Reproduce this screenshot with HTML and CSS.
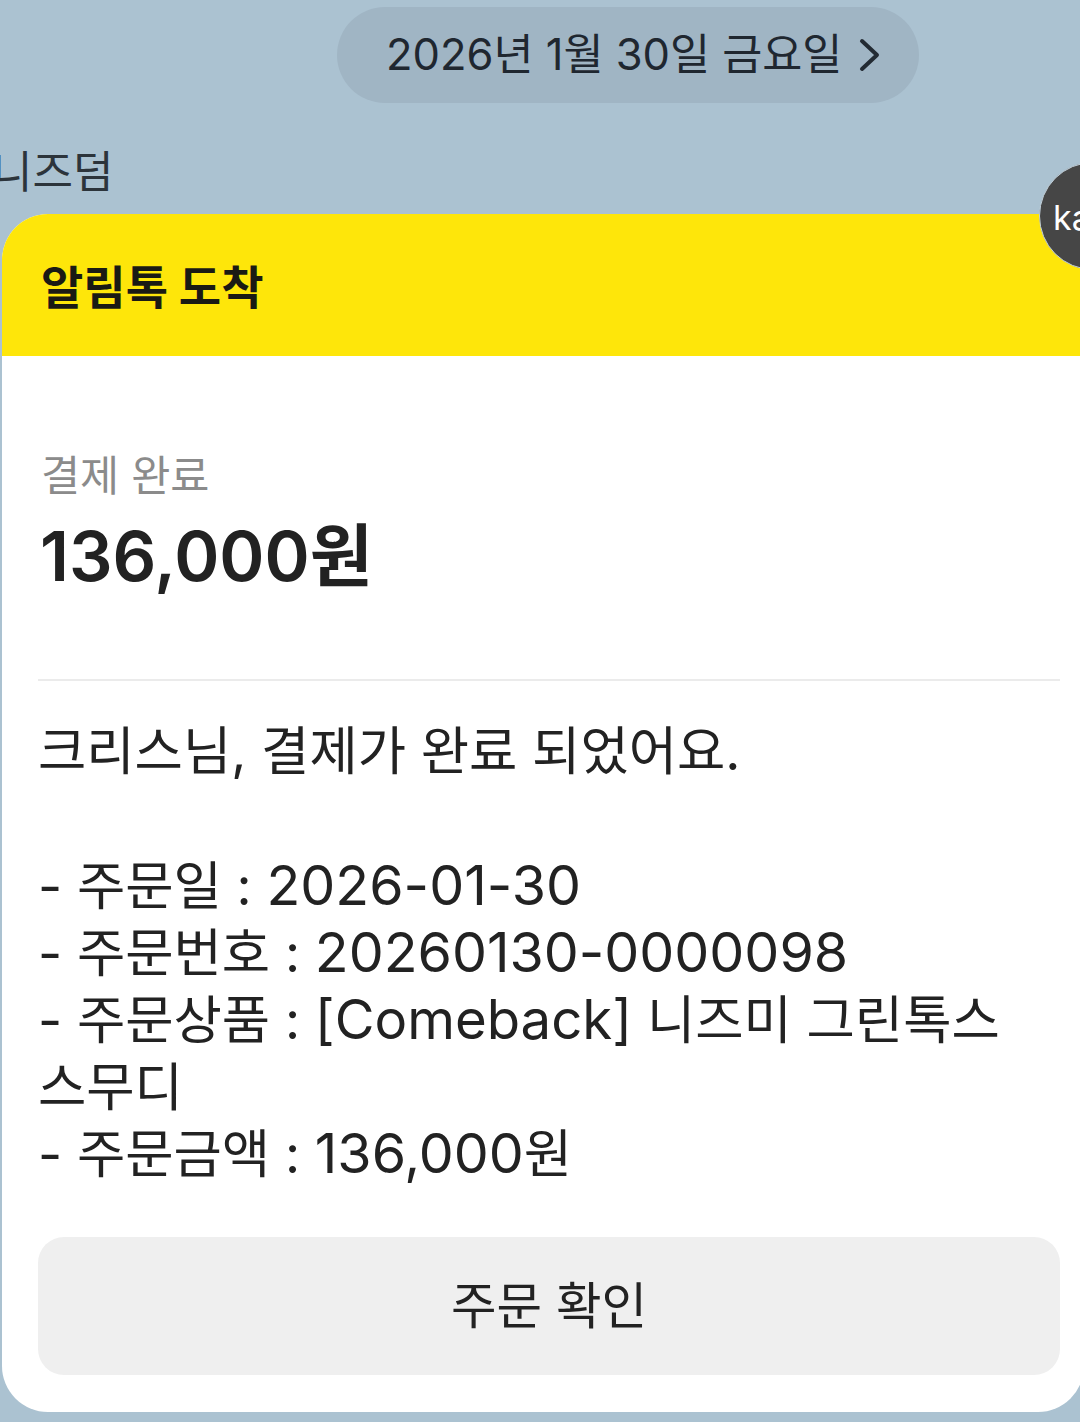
FILE: index.html
```html
<!DOCTYPE html>
<html lang="ko">
<head>
    <meta charset="UTF-8">
    <meta name="viewport" content="width=device-width, initial-scale=1.0">
    <title>알림톡 도착</title>
    <link rel="stylesheet" href="styles.css">
</head>
<body>
    <div class="date-row">
        <div class="date-pill">
            <span class="date-text">2026년 1월 30일 금요일</span>
            <svg class="chevron" width="22" height="34" viewBox="0 0 22 34"><path d="M3 3 L18 17 L3 31" fill="none" stroke="#232b33" stroke-width="4" stroke-linecap="round" stroke-linejoin="round"/></svg>
        </div>
    </div>
    <div class="sender">니즈덤</div>
    <div class="message">
        <div class="badge">ka</div>
        <div class="card">
            <div class="card-head">알림톡 도착</div>
            <div class="card-body">
                <div class="paid-label">결제 완료</div>
                <div class="paid-amount">136,000원</div>
                <div class="divider"></div>
                <div class="text">
                    <p class="greeting">크리스님, 결제가 완료 되었어요.</p>
                    <p>- 주문일 : <span class="num">2026-01-30</span></p>
                    <p>- 주문번호 : <span class="num">20260130-0000098</span></p>
                    <p>- 주문상품 : <span class="latin">[Comeback]</span> 니즈미 그린톡스</p>
                    <p>스무디</p>
                    <p>- 주문금액 : <span class="num">136,000</span>원</p>
                </div>
                <div class="order-btn">주문 확인</div>
            </div>
        </div>
    </div>
</body>
</html>
```
FILE: styles.css
```css
body {
    margin: 0;
    height: 1422px;
    overflow: hidden;
    background-color: #abc2d1;
    font-family: "Inter", "Noto Sans CJK KR", sans-serif;
    color: #222222;
}
.date-row {
    display: flex;
    justify-content: center;
    padding: 7px 0 0 176px;
    box-sizing: border-box;
    width: 1080px;
}
.date-pill {
    width: 582px;
    height: 96px;
    box-sizing: border-box;
    border-radius: 48px;
    background-color: #a0b5c4;
    display: flex;
    align-items: center;
    padding-left: 49px;
    gap: 17px;
    font-size: 43.5px;
    color: #1f2730;
}
.date-text {
    position: relative;
    top: -4px;
}
.sender {
    margin-top: 38px;
    height: 73px;
    margin-left: -8px;
    font-size: 44px;
    line-height: 62px;
    color: #2c343b;
}
.message {
    position: relative;
    margin-left: 2px;
    width: 1082px;
}
.badge {
    position: absolute;
    left: 1037px;
    top: -52px;
    width: 108px;
    height: 108px;
    border-radius: 50%;
    background-color: #464646;
    border: 1px solid #c4d2dc;
    box-sizing: border-box;
    color: #ffffff;
    font-size: 34px;
    line-height: 110px;
    padding-left: 13px;
}
.card {
    border-radius: 46px;
    overflow: hidden;
    background-color: #ffffff;
    height: 1198px;
}
.card-head {
    height: 142px;
    background-color: #fee60a;
    box-sizing: border-box;
    padding-left: 39px;
    font-size: 46px;
    font-weight: 700;
    line-height: 146px;
    color: #1a1a14;
}
.card-body {
    padding: 0 24px 0 36px;
}
.paid-label {
    padding: 92px 0 0 3px;
    font-size: 42.5px;
    line-height: 56px;
    color: #8b8b8b;
}
.paid-amount {
    margin-top: 7px;
    padding-left: 2px;
    font-size: 68.5px;
    font-weight: 600;
    line-height: 92px;
    color: #222222;
}
.divider {
    margin-top: 76px;
    height: 2px;
    background-color: #ebebeb;
}
.text {
    margin-top: 37px;
    font-size: 52.5px;
    line-height: 67px;
}
.text p {
    margin: 0;
}
.text .greeting {
    margin-bottom: 68px;
}
.num {
    font-size: 55.5px;
    line-height: 1;
}
.latin {
    font-size: 54.5px;
    line-height: 1;
}
.order-btn {
    margin-top: 49px;
    height: 138px;
    border-radius: 26px;
    background-color: #efefef;
    font-size: 49.5px;
    line-height: 138px;
    text-align: center;
}
```
